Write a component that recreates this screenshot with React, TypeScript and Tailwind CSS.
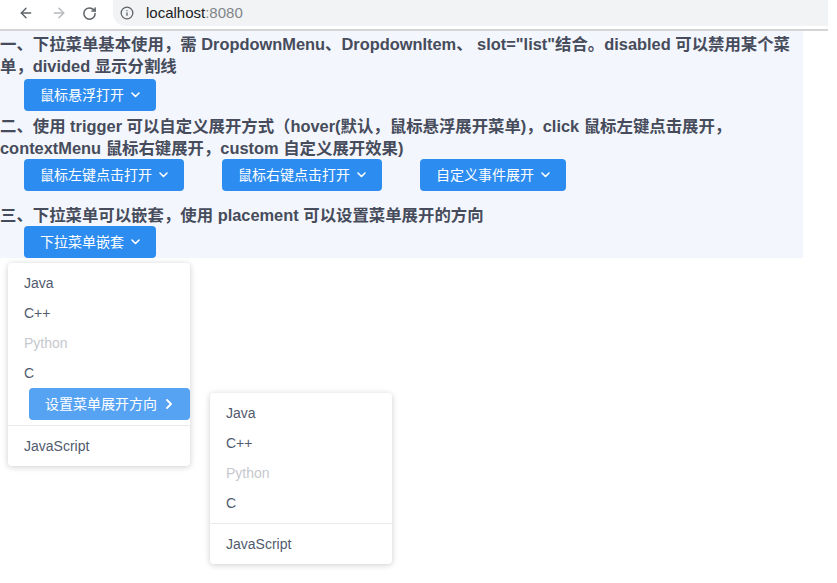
import { ArrowLeft, ArrowRight, RotateCw, Info } from "lucide-react";

const font = "font-['Liberation_Sans','Noto_Sans_CJK_SC',sans-serif]";

function ChevronDown() {
  return (
    <svg width="9" height="6" viewBox="0 0 9 6" className="ml-[7px]">
      <polyline points="1,1 4.5,4.5 8,1" fill="none" stroke="currentColor" strokeWidth="1.6" strokeLinecap="round" strokeLinejoin="round" />
    </svg>
  );
}

function ChevronRight() {
  return (
    <svg width="6" height="10" viewBox="0 0 6 10" className="ml-[9px]">
      <polyline points="1,1 5,5 1,9" fill="none" stroke="currentColor" strokeWidth="1.8" strokeLinecap="round" strokeLinejoin="round" />
    </svg>
  );
}

function Btn({ label, className = "" }: { label: string; className?: string }) {
  return (
    <button className={`flex h-8 items-center rounded bg-[#2d8cf0] px-4 text-[14px] font-normal text-white ${className}`}>
      {label}
      <ChevronDown />
    </button>
  );
}

const langs = [
  { label: "Java" },
  { label: "C++" },
  { label: "Python", disabled: true },
  { label: "C" },
];

function Item({ label, disabled }: { label: string; disabled?: boolean }) {
  return (
    <div className={`h-[30px] px-4 text-[14px] leading-[30px] ${disabled ? "text-[#c5c8ce]" : "text-[#515a6e]"}`}>
      {label}
    </div>
  );
}

function Divided({ label }: { label: string }) {
  return (
    <div className="mt-[5px] border-t border-[#e8eaec] pt-[5px]">
      <Item label={label} />
    </div>
  );
}

export default function App() {
  return (
    <div className={`relative h-[583px] w-[837px] overflow-hidden bg-white ${font}`}>
      {/* browser bar */}
      <div className="flex h-[31px] w-[828px] items-start border-b-2 border-[#d4d4d4]">
        <div className="flex h-[26px] items-center">
          <ArrowLeft className="ml-[18px] h-4 w-4 text-[#5f6368]" strokeWidth={2.2} />
          <ArrowRight className="ml-[17px] h-4 w-4 text-[#b7b9bc]" strokeWidth={2.2} />
          <RotateCw className="ml-[15px] h-[15px] w-[15px] text-[#5f6368]" strokeWidth={2.4} />
        </div>
        <div className="ml-[16px] flex h-[26px] flex-1 items-center rounded-bl-[13px] bg-[#f1f3f4] pl-[7px]">
          <Info className="h-[14px] w-[14px] text-[#5f6368]" strokeWidth={2.2} />
          <span className="ml-[12px] text-[15px] text-[#202124]">
            localhost<span className="text-[#80868b]">:8080</span>
          </span>
        </div>
      </div>

      {/* demo area */}
      <div className="w-[803px] bg-[#f4f6fd] pt-[2px] text-[16.4px] font-bold leading-[22px] text-[#464c5b]">
        <p className="whitespace-nowrap">
          一、下拉菜单基本使用，需 DropdownMenu、DropdownItem、 slot="list"结合。disabled 可以禁用某个菜
          <br />
          单，divided 显示分割线
        </p>
        <Btn label="鼠标悬浮打开" className="ml-6 mt-[2px]" />

        <p className="mt-[4px] whitespace-nowrap">
          二、使用 trigger 可以自定义展开方式（hover(默认，鼠标悬浮展开菜单)，click 鼠标左键点击展开，
          <br />
          contextMenu 鼠标右键展开，custom 自定义展开效果)
        </p>
        <div className="ml-6 flex gap-[38px]">
          <Btn label="鼠标左键点击打开" />
          <Btn label="鼠标右键点击打开" />
          <Btn label="自定义事件展开" />
        </div>

        <p className="mt-[13px]">三、下拉菜单可以嵌套，使用 placement 可以设置菜单展开的方向</p>
        <Btn label="下拉菜单嵌套" className="ml-6" />
      </div>

      {/* nested dropdown */}
      <div className="ml-2 mt-[5px] w-[182px] rounded bg-white py-[5px] shadow-[0_1px_6px_rgba(0,0,0,0.2)]">
        {langs.map((l) => (
          <Item key={l.label} label={l.label} disabled={l.disabled} />
        ))}
        <div className="relative">
          <button className="ml-[21px] flex h-8 w-[161px] items-center rounded bg-[#57a3f3] px-4 text-[14px] text-white">
            设置菜单展开方向
            <ChevronRight />
          </button>
          <div className="absolute left-[202px] top-[5px] w-[182px] rounded bg-white py-[5px] shadow-[0_1px_6px_rgba(0,0,0,0.2)]">
            {langs.map((l) => (
              <Item key={l.label} label={l.label} disabled={l.disabled} />
            ))}
            <Divided label="JavaScript" />
          </div>
        </div>
        <Divided label="JavaScript" />
      </div>
    </div>
  );
}
